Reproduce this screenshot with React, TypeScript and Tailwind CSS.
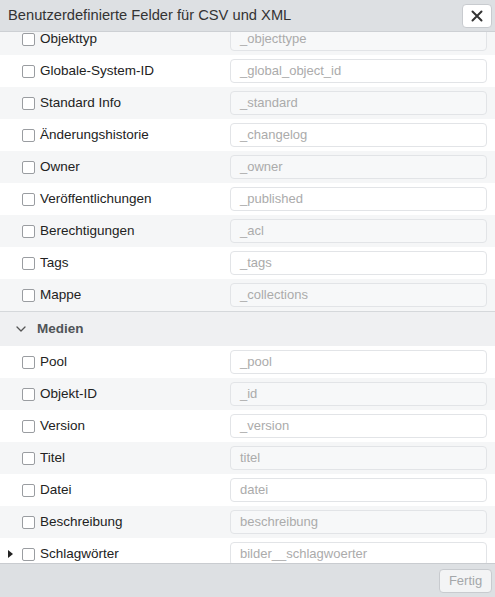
import React from "react";

type Row = { label: string; placeholder: string; arrow?: boolean };

const groupA: Row[] = [
  { label: "Objekttyp", placeholder: "_objecttype" },
  { label: "Globale-System-ID", placeholder: "_global_object_id" },
  { label: "Standard Info", placeholder: "_standard" },
  { label: "Änderungshistorie", placeholder: "_changelog" },
  { label: "Owner", placeholder: "_owner" },
  { label: "Veröffentlichungen", placeholder: "_published" },
  { label: "Berechtigungen", placeholder: "_acl" },
  { label: "Tags", placeholder: "_tags" },
  { label: "Mappe", placeholder: "_collections" },
];

const groupB: Row[] = [
  { label: "Pool", placeholder: "_pool" },
  { label: "Objekt-ID", placeholder: "_id" },
  { label: "Version", placeholder: "_version" },
  { label: "Titel", placeholder: "titel" },
  { label: "Datei", placeholder: "datei" },
  { label: "Beschreibung", placeholder: "beschreibung" },
  { label: "Schlagwörter", placeholder: "bilder__schlagwoerter", arrow: true },
];

function FieldRow({ row, gray }: { row: Row; gray: boolean }) {
  return (
    <div
      className={`flex h-[32px] shrink-0 items-center ${gray ? "bg-[#f5f6f7]" : "bg-white"}`}
    >
      <div className="relative flex w-[230px] items-center pl-[22px]">
        {row.arrow && (
          <svg
            className="absolute left-[8px] top-1/2 -translate-y-1/2"
            width="5"
            height="8"
            viewBox="0 0 5 8"
          >
            <path d="M0 0 L5 4 L0 8 Z" fill="#222" />
          </svg>
        )}
        <span className="h-[13px] w-[13px] shrink-0 rounded-[2px] border border-[#9a9da1] bg-white" />
        <span className="ml-[5px] text-[13.5px] text-[#222]">{row.label}</span>
      </div>
      <div
        className={`flex h-[24px] w-[257px] items-center rounded-[4px] border border-[#e2e4e7] pl-[9px] text-[13px] text-[#ababab] ${gray ? "bg-[#f7f8f9]" : "bg-white"}`}
      >
        {row.placeholder}
      </div>
    </div>
  );
}

export default function App() {
  return (
    <div
      className="flex h-[597px] w-[495px] flex-col overflow-hidden bg-white"
      style={{ fontFamily: '"Liberation Sans", Arial, sans-serif' }}
    >
      <div className="relative z-10 flex h-[32px] shrink-0 items-center justify-between border-b border-[#cdd0d4] bg-[#dde0e3] pl-[8px] pr-[3px]">
        <span className="text-[14.7px] text-[#333]">
          Benutzerdefinierte Felder für CSV und XML
        </span>
        <div className="flex h-[24px] w-[30px] items-center justify-center rounded-[4px] border border-[#c8cbcf] bg-white">
          <svg width="12" height="12" viewBox="0 0 12 12">
            <path
              d="M1.5 1.5 L10.5 10.5 M10.5 1.5 L1.5 10.5"
              stroke="#333"
              strokeWidth="2"
              strokeLinecap="round"
            />
          </svg>
        </div>
      </div>
      <div className="flex-1 overflow-hidden">
        <div className="-mt-[9px] flex flex-col">
          {groupA.map((r, i) => (
            <FieldRow key={r.label} row={r} gray={i % 2 === 0} />
          ))}
          <div className="flex h-[35px] shrink-0 items-center border-t border-[#d5d8db] bg-[#eff0f2] pl-[16px]">
            <svg width="10" height="6" viewBox="0 0 10 6">
              <path
                d="M1 1 L5 5 L9 1"
                fill="none"
                stroke="#555"
                strokeWidth="1.3"
                strokeLinecap="round"
                strokeLinejoin="round"
              />
            </svg>
            <span className="ml-[11px] text-[13.5px] font-bold text-[#505458]">
              Medien
            </span>
          </div>
          {groupB.map((r, i) => (
            <FieldRow key={r.label} row={r} gray={i % 2 === 1} />
          ))}
        </div>
      </div>
      <div className="flex h-[34px] shrink-0 items-center justify-end border-t border-[#c9ccd0] bg-[#dde0e3] pr-[3px]">
        <div className="flex h-[24px] w-[53px] items-center justify-center rounded-[4px] border border-[#c8cbcf] bg-[#f3f4f5] text-[13px] text-[#a4a7aa]">
          Fertig
        </div>
      </div>
    </div>
  );
}
